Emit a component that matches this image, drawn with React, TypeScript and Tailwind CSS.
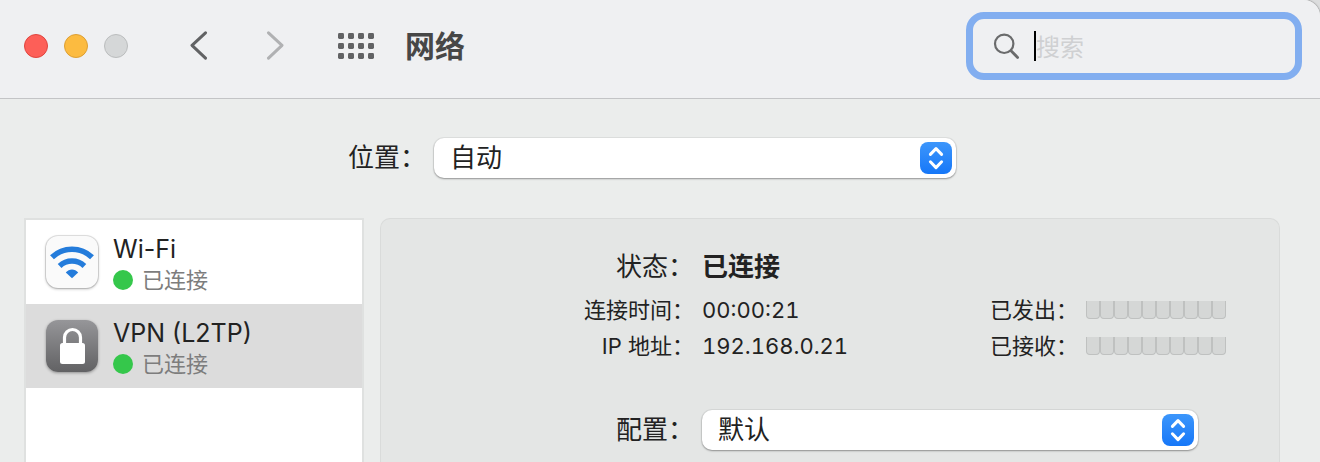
import { useState } from "react";

const SERVICES = [
  { id: "wifi", name: "Wi-Fi", status: "已连接" },
  { id: "vpn", name: "VPN (L2TP)", status: "已连接" },
];

const SEGMENTS = 10;

const WifiIcon = () => (
  <span className="flex h-[52px] w-[52px] shrink-0 items-center justify-center rounded-xl bg-[#fafafa] shadow-[0_1px_3px_rgba(0,0,0,0.3)] ring-1 ring-black/10">
    <svg viewBox="0 0 52 52" className="h-[52px] w-[52px]" fill="none">
      <path
        d="M6 21.2a29 29 0 0 1 40 0"
        stroke="#247cdb"
        strokeWidth="5.6"
      />
      <path
        d="M13.6 30a18 18 0 0 1 24.8 0"
        stroke="#247cdb"
        strokeWidth="5.4"
      />
      <path
        d="M19.8 36.6c3.4-4.2 9-4.2 12.4 0L26 42.2z"
        fill="#247cdb"
      />
    </svg>
  </span>
);

const LockIcon = () => (
  <span className="flex h-[52px] w-[52px] shrink-0 items-center justify-center rounded-xl bg-linear-to-b from-[#969699] to-[#626264] shadow-[0_1px_3px_rgba(0,0,0,0.35)]">
    <svg viewBox="0 0 52 52" className="h-[52px] w-[52px]" fill="none">
      <rect x="14" y="23" width="25" height="21" rx="2.5" fill="#fff" />
      <path
        d="M18.5 24v-6.5a8 8 0 0 1 16 0V24"
        stroke="#fff"
        strokeWidth="3.2"
      />
    </svg>
  </span>
);

type PopupProps = {
  id: string;
  options: string[];
  className: string;
};

const Popup = ({ id, options, className }: PopupProps) => (
  <div className={`relative ${className}`}>
    <select
      id={id}
      className="block h-10 w-full appearance-none rounded-[10px] bg-white pr-12 pl-4 text-[26px] leading-10 shadow-[0_1px_2px_rgba(0,0,0,0.35)] ring-1 ring-black/5 outline-none"
    >
      {options.map((option) => (
        <option key={option}>{option}</option>
      ))}
    </select>
    <span className="pointer-events-none absolute top-1 right-1 h-8 w-8 rounded-lg bg-linear-to-b from-[#3c96fb] to-[#1577f8]">
      <svg
        viewBox="0 0 32 32"
        className="h-8 w-8"
        fill="none"
        stroke="#fff"
        strokeWidth="3"
        strokeLinecap="round"
        strokeLinejoin="round"
      >
        <path d="M10.4 12.4 16 6.6l5.6 5.8M10.4 19.8l5.6 5.8 5.6-5.8" />
      </svg>
    </span>
  </div>
);

const Traffic = ({ label }: { label: string }) => (
  <div className="flex items-center gap-2">
    <span>{label}</span>
    <div className="flex" role="img" aria-label={label}>
      {Array.from({ length: SEGMENTS }, (_, i) => (
        <span
          key={i}
          className="h-[18px] w-[14px] rounded-b-[4px] border-x border-b border-[#bfc1c0] bg-[#d5d7d6]"
        />
      ))}
    </div>
  </div>
);

const App = () => {
  const [selected, setSelected] = useState("vpn");
  const [query, setQuery] = useState("");

  return (
    <div className="h-screen bg-[#dcddde]">
      <main className="flex h-full flex-col overflow-hidden rounded-tr-[16px] bg-[#ebedec] font-[Inter,'Noto_Sans_CJK_SC',sans-serif] text-[26px] text-[#222] shadow-[0_0_2px_rgba(0,0,0,0.6)]">
        <header className="flex h-[99px] shrink-0 items-center border-b border-[#c3c4c6] bg-[#eff0f2] pr-[18px] pb-1.5 pl-6">
          <div className="flex gap-4">
            <button
              aria-label="关闭"
              className="h-6 w-6 rounded-full border border-[#e0443e] bg-[#fd5f58]"
            />
            <button
              aria-label="最小化"
              className="h-6 w-6 rounded-full border border-[#dd9f33] bg-[#fcbb40]"
            />
            <button
              aria-label="缩放"
              disabled
              className="h-6 w-6 rounded-full border border-[#bbbdbe] bg-[#d5d7d8]"
            />
          </div>
          <nav className="ml-[33px] flex text-[#616264]">
            <button
              aria-label="后退"
              className="flex w-[76px] justify-center py-2"
            >
              <svg
                viewBox="0 0 18 30"
                className="h-[30px] w-[18px]"
                fill="none"
                stroke="currentColor"
                strokeWidth="3"
                strokeLinecap="round"
                strokeLinejoin="round"
              >
                <path d="M15.5 1.8 2 14.3l13.5 12.8" />
              </svg>
            </button>
            <button
              aria-label="前进"
              disabled
              className="flex w-[76px] justify-center py-2 text-[#b0b1b3]"
            >
              <svg
                viewBox="0 0 18 30"
                className="h-[30px] w-[18px]"
                fill="none"
                stroke="currentColor"
                strokeWidth="3"
                strokeLinecap="round"
                strokeLinejoin="round"
              >
                <path d="M2.5 1.8 16 14.3 2.5 27.1" />
              </svg>
            </button>
            <button
              aria-label="显示全部"
              className="flex w-[86px] items-center justify-center"
            >
              <svg
                viewBox="0 0 36 26"
                className="h-[26px] w-9"
                fill="currentColor"
              >
                {[0, 10, 20].map((y) =>
                  [0, 10, 20, 30].map((x) => (
                    <rect
                      key={`${x}-${y}`}
                      x={x}
                      y={y}
                      width="6"
                      height="6"
                      rx="1.4"
                    />
                  ))
                )}
              </svg>
            </button>
          </nav>
          <h1 className="ml-1.5 text-[30px] leading-10 font-bold text-[#474747]">
            网络
          </h1>
          <label className="ml-auto flex h-[68px] w-[336px] items-center rounded-[18px] border-[7px] border-[#82aef0] pl-5">
            <svg
              viewBox="0 0 28 28"
              className="h-7 w-7 shrink-0"
              fill="none"
              stroke="#6a6b6c"
              strokeLinecap="round"
            >
              <circle cx="11.2" cy="11.8" r="9.2" strokeWidth="2.2" />
              <path d="m18 18.8 6.6 6.6" strokeWidth="2.8" />
            </svg>
            <span className="ml-[13px] h-[30px] w-0.5 shrink-0 bg-black" />
            <input
              type="text"
              aria-label="搜索"
              placeholder="搜索"
              value={query}
              onChange={(e) => setQuery(e.target.value)}
              className="w-full min-w-0 bg-transparent pt-1 text-[24px] leading-9 outline-none placeholder:text-[#cfd0d2]"
            />
          </label>
        </header>

        <div className="flex min-h-0 flex-1 flex-col pr-10 pl-6">
          <div className="flex items-center justify-center gap-2 pt-[39px] pb-10">
            <label htmlFor="location" className="leading-10">
              位置：
            </label>
            <Popup
              id="location"
              options={["自动"]}
              className="w-[522px]"
            />
          </div>

          <div className="flex min-h-0 flex-1 gap-4">
            <ul className="w-[340px] shrink-0 border-2 border-b-0 border-[#dfe1e0] bg-white">
              {SERVICES.map((service) => (
                <li key={service.id}>
                  <button
                    onClick={() => setSelected(service.id)}
                    className={`flex h-[84px] w-full items-center gap-[15px] pl-5 text-left ${
                      selected === service.id ? "bg-[#dcdcdc]" : ""
                    }`}
                  >
                    {service.id === "wifi" ? <WifiIcon /> : <LockIcon />}
                    <span className="pt-1">
                      <span className="block text-[25px] leading-8">
                        {service.name}
                      </span>
                      <span className="flex items-center gap-[9px] text-[22px] leading-[30px] text-[#7d7d7d]">
                        <span className="h-5 w-5 rounded-full bg-[#35c74b]" />
                        {service.status}
                      </span>
                    </span>
                  </button>
                </li>
              ))}
            </ul>

            <section className="flex-1 rounded-t-[10px] border border-b-0 border-[#d9dbda] bg-[#e4e6e5] pt-7">
              <div className="flex items-center gap-2 leading-10">
                <span className="w-[313px] text-right">状态：</span>
                <strong className="font-bold">已连接</strong>
              </div>
              <div className="flex items-center gap-2 pt-[5px] pr-[53px] text-[22px] leading-9">
                <span className="w-[313px] text-right">连接时间：</span>
                <span className="flex-1 tabular-nums">00:00:21</span>
                <Traffic label="已发出：" />
              </div>
              <div className="flex items-center gap-2 pr-[53px] text-[22px] leading-9">
                <span className="w-[313px] text-right">IP 地址：</span>
                <span className="flex-1 tabular-nums">192.168.0.21</span>
                <Traffic label="已接收：" />
              </div>
              <div className="flex items-center gap-2 pt-[46px]">
                <label
                  htmlFor="config"
                  className="w-[313px] text-right leading-10"
                >
                  配置：
                </label>
                <Popup
                  id="config"
                  options={["默认"]}
                  className="w-[496px]"
                />
              </div>
            </section>
          </div>
        </div>
      </main>
    </div>
  );
};

export default App;
